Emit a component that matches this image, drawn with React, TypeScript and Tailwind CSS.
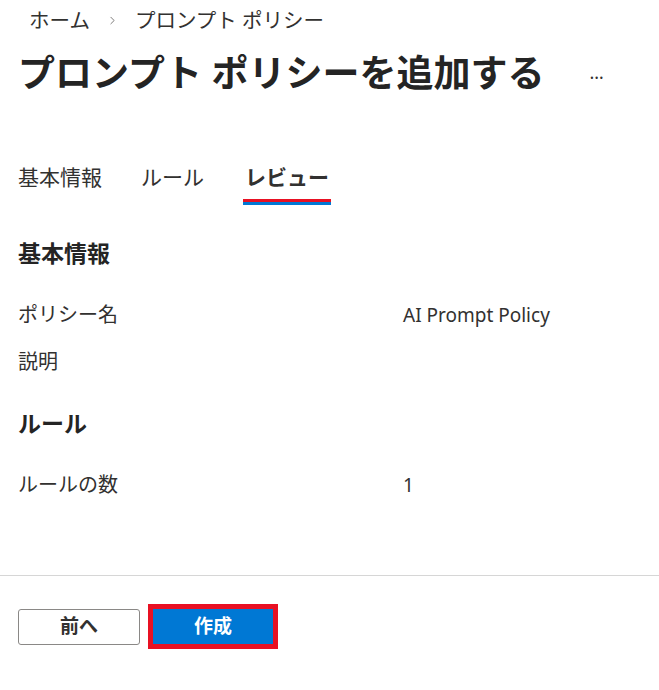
import { ChevronRight } from "lucide-react";

const jp = "font-['Segoe_UI','Noto_Sans','Noto_Sans_CJK_JP',sans-serif]";

const tabs = [
	{ label: "基本情報", active: false },
	{ label: "ルール", active: false },
	{ label: "レビュー", active: true },
];

function Row({ label, value }: { label: string; value?: string }) {
	return (
		<div className="flex h-[40px] items-center text-[20px] text-[#323130]">
			<span className="w-[385px]">{label}</span>
			<span className="text-[19px]">{value}</span>
		</div>
	);
}

export default function App() {
	return (
		<div className={`flex h-[690px] w-[659px] flex-col bg-white ${jp}`}>
			{/* breadcrumb */}
			<div className="flex h-[40px] items-center pl-[29px] text-[20.5px] text-[#323130]">
				<span>ホーム</span>
				<ChevronRight className="mx-[16px] h-[13px] w-[13px] text-[#605e5c]" strokeWidth={1.5} />
				<span>プロンプト ポリシー</span>
			</div>

			{/* title */}
			<div className="flex h-[64px] items-center pl-[18px]">
				<h1 className="text-[37px] font-bold leading-none text-[#242424]">
					プロンプト ポリシーを追加する
				</h1>
				<span className="ml-[45px] text-[18px] text-[#323130]">…</span>
			</div>

			{/* tabs */}
			<div className="mt-[58px] flex gap-[39px] pl-[18px]">
				{tabs.map((t) => (
					<div key={t.label} className="flex flex-col">
						<span
							className={`h-[30px] text-[21px] leading-[30px] text-[#323130] ${
								t.active ? "font-bold px-[2px]" : ""
							}`}>
							{t.label}
						</span>
						<div className="mt-[7px] flex flex-col">
							<div className={`h-[3px] ${t.active ? "bg-[#e81123]" : ""}`} />
							<div className={`h-[3px] ${t.active ? "bg-[#0078d4]" : ""}`} />
						</div>
					</div>
				))}
			</div>

			<div className="flex flex-col pl-[18px]">
				<h2 className="mt-[28px] flex h-[40px] items-center text-[23px] font-bold text-[#242424]">
					基本情報
				</h2>
				<div className="mt-[22px]">
					<Row label="ポリシー名" value="AI Prompt Policy" />
				</div>
				<div className="mt-[7px]">
					<Row label="説明" />
				</div>
				<h2 className="mt-[21px] flex h-[40px] items-center text-[23px] font-bold text-[#242424]">
					ルール
				</h2>
				<div className="mt-[22px]">
					<Row label="ルールの数" value="1" />
				</div>
			</div>

			<div className="mt-[70px] border-t border-[#d6d6d6]" />

			<div className="mt-[28px] flex items-center gap-[8px] pl-[18px]">
				<button className="flex h-[36px] w-[122px] items-center justify-center rounded-[3px] border border-[#8a8886] bg-white text-[19px] font-bold text-[#323130]">
					前へ
				</button>
				<div className="border-[5px] border-[#e81123]">
					<button className="flex h-[35px] w-[120px] items-center justify-center bg-[#0078d4] text-[19px] font-bold text-white">
						作成
					</button>
				</div>
			</div>
		</div>
	);
}
